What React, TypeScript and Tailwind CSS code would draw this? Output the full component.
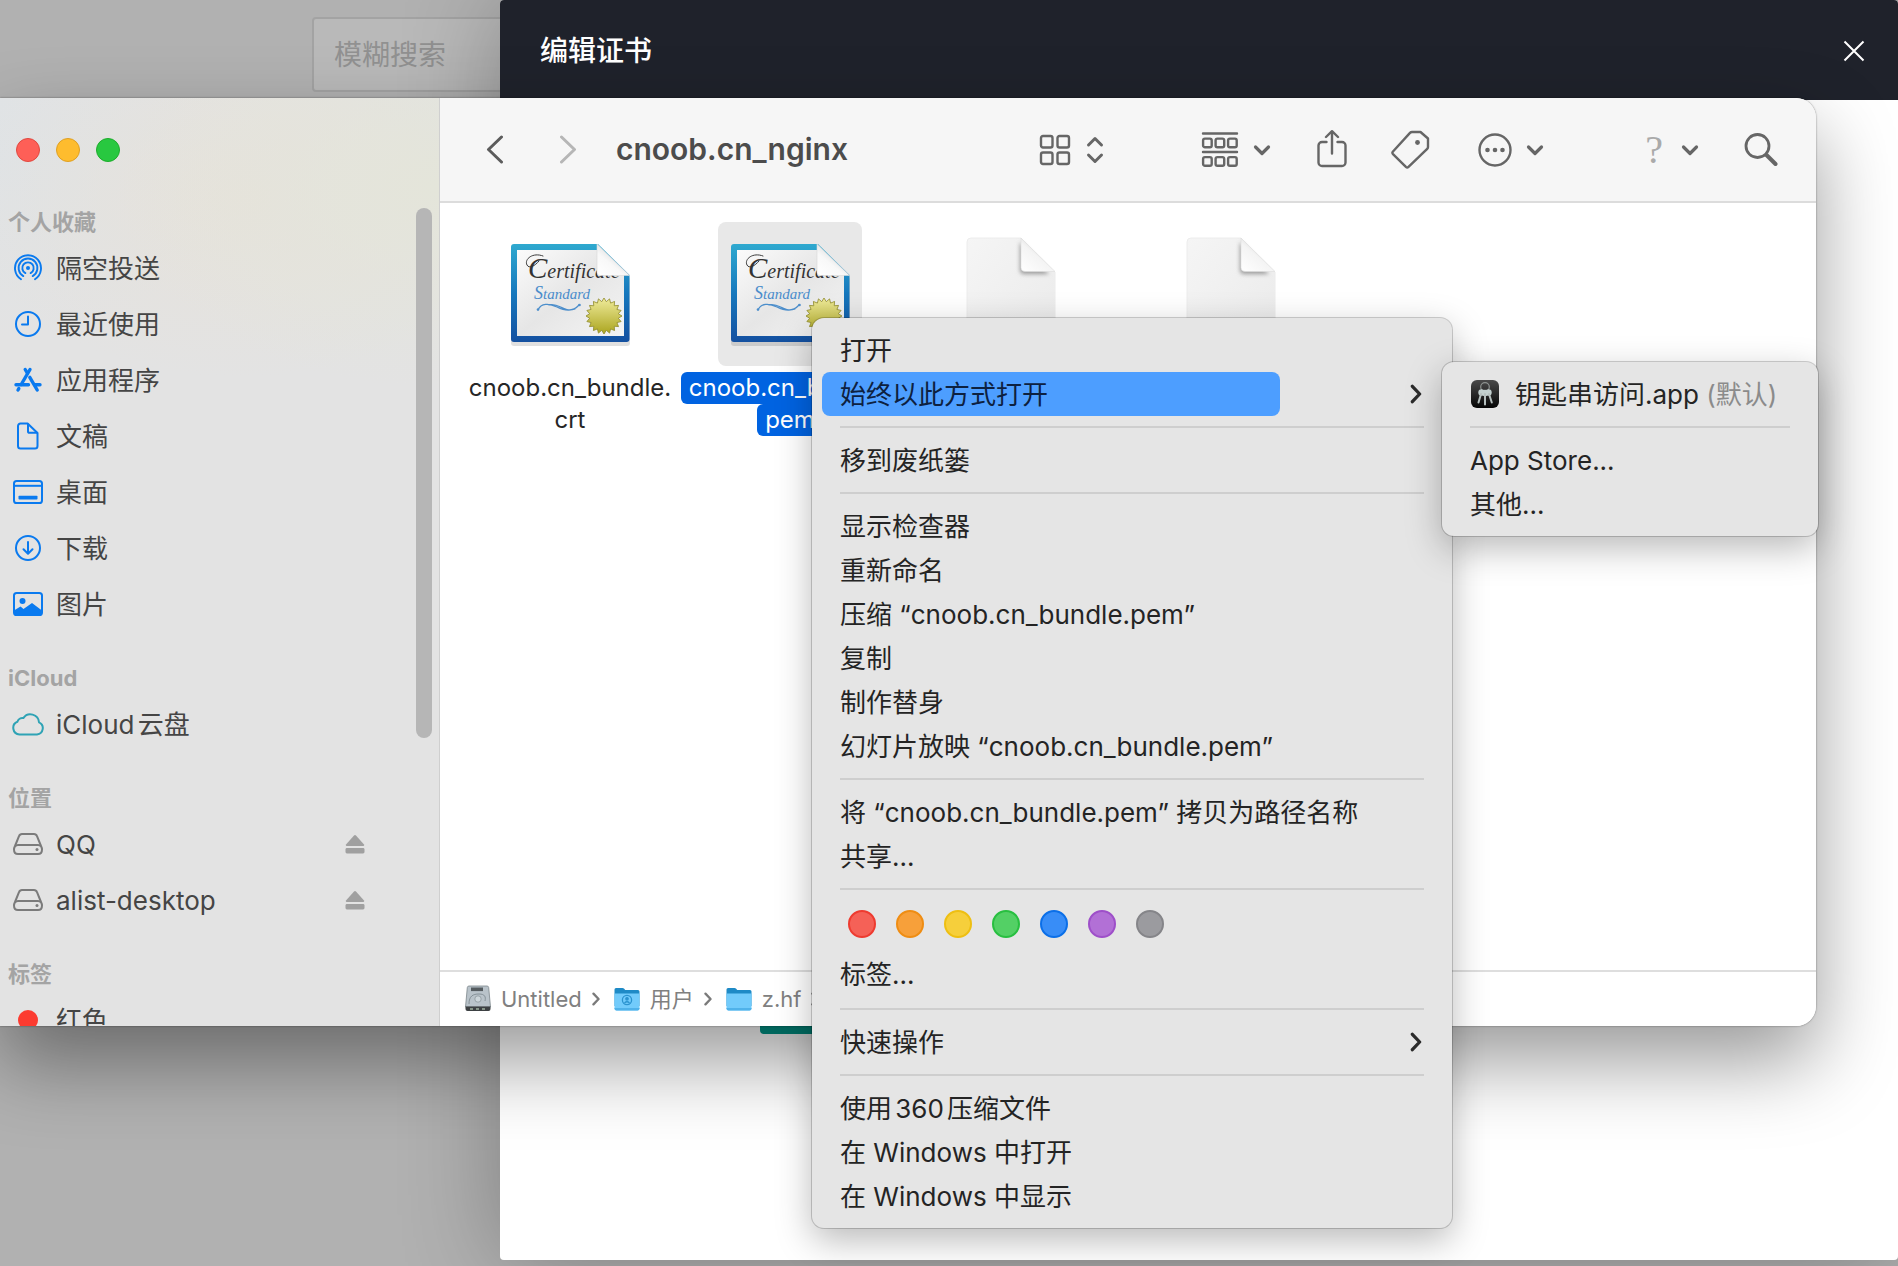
import type { ReactNode } from 'react';

type SidebarItem = { label: string; icon: ReactNode; eject?: boolean };
type SidebarSection = { title: string; items: SidebarItem[] };

const BLUE = '#0a7aef';

function AirDropIcon() {
  return (
    <svg width="28" height="28" viewBox="0 0 28 28" fill="none" stroke={BLUE} strokeWidth="1.9" strokeLinecap="round">
      <path d="M7 25.2A13 13 0 1 1 21 25.2" />
      <path d="M9.3 22.1A9.4 9.4 0 1 1 18.7 22.1" />
      <path d="M11.4 19.1A5.7 5.7 0 1 1 16.6 19.1" />
      <circle cx="14" cy="14" r="2" fill={BLUE} stroke="none" />
    </svg>
  );
}

function ClockIcon() {
  return (
    <svg width="28" height="28" viewBox="0 0 28 28" fill="none" stroke={BLUE} strokeWidth="2" strokeLinecap="round" strokeLinejoin="round">
      <circle cx="14" cy="14" r="12" />
      <path d="M14 6.5V14.5H8" />
    </svg>
  );
}

function AppsIcon() {
  return (
    <svg width="28" height="28" viewBox="0 0 28 28" fill="none" stroke={BLUE} strokeWidth="3.4" strokeLinecap="round">
      <path d="M16 3.5L7.2 18.5M4.8 22.6L4 24" />
      <path d="M11.2 3.5L13.4 7.2M15.8 11.4L23.2 24" />
      <path d="M2 18.8H14.5M21 18.8H26" />
    </svg>
  );
}

function DocIcon() {
  return (
    <svg width="24" height="28" viewBox="0 0 24 28" fill="none" stroke={BLUE} strokeWidth="2" strokeLinejoin="round">
      <path d="M4.5 1.5H11.6L21.5 11V24A2.5 2.5 0 0 1 19 26.5H4.5A2.5 2.5 0 0 1 2 24V4A2.5 2.5 0 0 1 4.5 1.5Z" />
      <path d="M12 1.8V9.2A1.6 1.6 0 0 0 13.6 10.8H21.3" />
    </svg>
  );
}

function DesktopIcon() {
  return (
    <svg width="32" height="24" viewBox="0 0 32 24" fill="none" stroke={BLUE} strokeWidth="2">
      <rect x="2" y="1" width="28" height="22" rx="2.6" />
      <path d="M2 5.8H30" />
      <rect x="6.5" y="15.8" width="19" height="3.8" rx="0.8" fill={BLUE} stroke="none" />
    </svg>
  );
}

function DownloadIcon() {
  return (
    <svg width="28" height="28" viewBox="0 0 28 28" fill="none" stroke={BLUE} strokeWidth="2" strokeLinecap="round" strokeLinejoin="round">
      <circle cx="14" cy="14" r="12" />
      <path d="M14 8V19.5M9.5 15.2L14 19.7L18.5 15.2" />
    </svg>
  );
}

function PictureIcon() {
  return (
    <svg width="32" height="24" viewBox="0 0 32 24" fill="none">
      <rect x="2" y="1" width="28" height="22" rx="2.6" stroke={BLUE} strokeWidth="2" />
      <circle cx="10.5" cy="9" r="3" fill={BLUE} />
      <path d="M2 18.5L8.5 14.5L11.5 17L20 11L30 18.5V21Q30 23 28 23H4Q2 23 2 21Z" fill={BLUE} />
    </svg>
  );
}

function CloudIcon() {
  return (
    <svg width="34" height="24" viewBox="0 0 34 24" fill="none" stroke="#2fa3b5" strokeWidth="2" strokeLinejoin="round">
      <path d="M8.5 22.5A6.6 6.6 0 0 1 6.4 9.8A5.3 5.3 0 0 1 12.3 6.1A8.6 8.6 0 0 1 28 10.3A6.4 6.4 0 0 1 26 22.5Z" />
    </svg>
  );
}

function DriveIcon() {
  return (
    <svg width="30" height="24" viewBox="0 0 30 24" fill="none" stroke="#7b7b7b" strokeWidth="2" strokeLinejoin="round">
      <path d="M9 2H21Q23.2 2 24 4.2L28 14Q29 16 29 17.5Q29 22 25 22H5Q1 22 1 17.5Q1 16 2 14L6 4.2Q6.8 2 9 2Z" />
      <path d="M2 14.5Q3.2 13 5 13H25Q26.8 13 28 14.5" />
      <circle cx="24" cy="17.5" r="1.5" fill="#7b7b7b" stroke="none" />
    </svg>
  );
}

function EjectIcon() {
  return (
    <svg width="20" height="20" viewBox="0 0 20 20" fill="#a0a0a0">
      <path d="M9 1.6Q10 0.6 11 1.6L19 10.4Q19.8 12 18 12H2Q0.2 12 1 10.4Z" />
      <rect x="0.5" y="14" width="19" height="5.5" rx="1.4" />
    </svg>
  );
}

function SmallChevron() {
  return (
    <svg width="18" height="12" viewBox="0 0 18 12" fill="none" stroke="#666" strokeWidth="3.2" strokeLinecap="round" strokeLinejoin="round">
      <path d="M2.5 3L9 9.5L15.5 3" />
    </svg>
  );
}

function RightChevron({ className, color = '#2b2b2b' }: { className?: string; color?: string }) {
  return (
    <svg className={className} viewBox="0 0 12 22" fill="none" stroke={color} strokeWidth="3.6" strokeLinecap="round" strokeLinejoin="round">
      <path d="M2 2.5L10 11L2 19.5" />
    </svg>
  );
}

function GridIcon() {
  return (
    <svg width="32" height="32" viewBox="0 0 32 32" fill="none" stroke="#666" strokeWidth="2.4">
      <rect x="2" y="2" width="11.5" height="11.5" rx="2" />
      <rect x="18.5" y="2" width="11.5" height="11.5" rx="2" />
      <rect x="2" y="18.5" width="11.5" height="11.5" rx="2" />
      <rect x="18.5" y="18.5" width="11.5" height="11.5" rx="2" />
    </svg>
  );
}

function UpDownIcon() {
  return (
    <svg width="18" height="28" viewBox="0 0 18 28" fill="none" stroke="#666" strokeWidth="3" strokeLinecap="round" strokeLinejoin="round">
      <path d="M2.5 9L9 2.5L15.5 9M2.5 19L9 25.5L15.5 19" />
    </svg>
  );
}

function GroupIcon() {
  return (
    <svg width="38" height="38" viewBox="0 0 38 38" fill="none" stroke="#666" strokeWidth="2.4" strokeLinecap="round">
      <path d="M2 2.5H36M2 21H36" />
      {[2.1, 14.6, 27.1].map((x) => (
        <g key={x}>
          <rect x={x} y="7.6" width="8.6" height="8.6" rx="1.8" />
          <rect x={x} y="26.1" width="8.6" height="8.6" rx="1.8" />
        </g>
      ))}
    </svg>
  );
}

function ShareIcon() {
  return (
    <svg width="30" height="40" viewBox="0 0 30 40" fill="none" stroke="#666" strokeWidth="2.4" strokeLinecap="round" strokeLinejoin="round">
      <path d="M9.5 12H5A3.5 3.5 0 0 0 1.5 15.500V32.500A3.5 3.5 0 0 0 5 36H25A3.5 3.5 0 0 0 28.5 32.500V15.500A3.5 3.5 0 0 0 25 12H20.5" />
      <path d="M15 23.500V1.500M9 7L15 1.200L21 7" />
    </svg>
  );
}

function TagIcon() {
  return (
    <svg width="40" height="40" viewBox="0 0 40 40" fill="none" stroke="#666" strokeWidth="2.4" strokeLinejoin="round">
      <path d="M21 2H29.500L37 8.500V17Q37 18.100 36.200 18.900L17.500 36.800Q16.200 38 14.900 36.800L2 24.100Q0.800 22.800 2 21.500L19 2.900Q19.800 2 21 2Z" />
      <circle cx="26.500" cy="12.500" r="2.4" fill="#666" stroke="none" />
    </svg>
  );
}

function MoreIcon() {
  return (
    <svg width="36" height="36" viewBox="0 0 36 36" fill="none" stroke="#666" strokeWidth="2.4">
      <circle cx="18" cy="18" r="15.5" />
      <g fill="#666" stroke="none">
        <circle cx="10.5" cy="18" r="2.3" />
        <circle cx="18" cy="18" r="2.3" />
        <circle cx="25.5" cy="18" r="2.3" />
      </g>
    </svg>
  );
}

function SearchIcon() {
  return (
    <svg width="34" height="34" viewBox="0 0 34 34" fill="none" stroke="#666" strokeLinecap="round">
      <circle cx="13.5" cy="13" r="11.5" strokeWidth="2.8" />
      <path d="M22.5 22L31.5 31" strokeWidth="4" />
    </svg>
  );
}

function starPoints(cx: number, cy: number, outer: number, inner: number, n: number) {
  return Array.from({ length: n * 2 }, (_, i) => {
    const r = i % 2 ? inner : outer;
    const a = (Math.PI * i) / n;
    return `${(cx + r * Math.sin(a)).toFixed(2)},${(cy - r * Math.cos(a)).toFixed(2)}`;
  }).join(' ');
}

function CertificateIcon({ id }: { id: string }) {
  return (
    <svg width="128" height="108" viewBox="-1 -1 128 108">
      <defs>
        <linearGradient id={`${id}-frame`} x1="0" y1="0" x2="0" y2="1">
          <stop offset="0" stopColor="#2fa9cf" />
          <stop offset="0.5" stopColor="#1678bd" />
          <stop offset="1" stopColor="#1450a0" />
        </linearGradient>
        <linearGradient id={`${id}-paper`} x1="0" y1="0" x2="1" y2="1">
          <stop offset="0" stopColor="#fbfbfb" />
          <stop offset="0.5" stopColor="#e6e6e6" />
          <stop offset="1" stopColor="#f4f4f4" />
        </linearGradient>
        <linearGradient id={`${id}-fold`} x1="0" y1="1" x2="0.6" y2="0.3">
          <stop offset="0" stopColor="#ffffff" />
          <stop offset="0.6" stopColor="#f8f8f8" />
          <stop offset="1" stopColor="#dedede" />
        </linearGradient>
        <linearGradient id={`${id}-seal`} x1="0" y1="0" x2="0" y2="1">
          <stop offset="0" stopColor="#efeb9b" />
          <stop offset="1" stopColor="#aba51f" />
        </linearGradient>
      </defs>
      <path d="M7 5H91L123 37V102Q123 105 120 105H7Q4 105 4 102V8Q4 5 7 5Z" fill="#000" opacity="0.12" />
      <path d="M7 3H91L122.5 34V98Q122.5 101 119.5 101H7Q4 101 4 98V6Q4 3 7 3Z" fill={`url(#${id}-frame)`} />
      <path d="M10 9H91V34H117V95H10Z" fill={`url(#${id}-paper)`} />
      <path d="M36 15C26 11 17 18 20 24C22 28 28 25 32 20" fill="none" stroke="#3c3c3c" strokeWidth="1" strokeLinecap="round" />
      <text x="21" y="37" fontStyle="italic" fontFamily="Liberation Serif, serif" fill="#333">
        <tspan fontSize="29">C</tspan>
        <tspan fontSize="20">ertificate</tspan>
      </text>
      <text x="27" y="58" fontStyle="italic" fontFamily="Liberation Serif, serif" fill="#4a8ccb">
        <tspan fontSize="18">S</tspan>
        <tspan fontSize="15">tandard</tspan>
      </text>
      <path d="M31 69C34 62 42 62 50 66S66 71 72 64M42 64C52 61 56 72 68 68" fill="none" stroke="#4c8ecb" strokeWidth="1.2" strokeLinecap="round" />
      <circle cx="31" cy="68.500" r="1.300" fill="#4c8ecb" />
      <circle cx="72.500" cy="64" r="1.300" fill="#4c8ecb" />
      <path d="M90 3L122.5 34.5H93Q90 34.5 90 31.5Z" fill={`url(#${id}-fold)`} stroke="#d6d6d6" strokeWidth="0.6" />
      <polygon points={starPoints(97, 75, 18, 14.5, 20)} fill={`url(#${id}-seal)`} stroke="#8f8a2a" strokeWidth="0.8" />
    </svg>
  );
}

function BlankFileIcon({ id }: { id: string }) {
  return (
    <svg width="96" height="116" viewBox="-1 -1 96 116">
      <defs>
        <linearGradient id={`${id}-body`} x1="0" y1="0" x2="1" y2="1">
          <stop offset="0" stopColor="#f5f5f5" />
          <stop offset="1" stopColor="#eaeaea" />
        </linearGradient>
        <linearGradient id={`${id}-corner`} x1="0" y1="1" x2="0.6" y2="0.3">
          <stop offset="0" stopColor="#ffffff" />
          <stop offset="0.7" stopColor="#f4f4f4" />
          <stop offset="1" stopColor="#dcdcdc" />
        </linearGradient>
        <filter id={`${id}-soft`} x="-30%" y="-30%" width="160%" height="160%">
          <feGaussianBlur stdDeviation="2" />
        </filter>
      </defs>
      <path d="M8 1H58L92 35V110Q92 114 88 114H8Q4 114 4 110V5Q4 1 8 1Z" fill={`url(#${id}-body)`} stroke="#ececec" />
      <path d="M57 5V33Q57 37 61 37H86Z" fill="#9a9a9a" filter={`url(#${id}-soft)`} />
      <path d="M58 1L92 34.5H62Q58 34.5 58 30.5Z" fill={`url(#${id}-corner)`} stroke="#dedede" strokeWidth="0.6" />
    </svg>
  );
}

function HardDiskIcon() {
  return (
    <svg width="26" height="28" viewBox="0 0 26 28">
      <path d="M4 1H22Q23.500 1 23.700 2.500L25.500 22H0.500L2.300 2.500Q2.500 1 4 1Z" fill="#b9c3ca" stroke="#7c868c" strokeWidth="0.8" />
      <path d="M0.500 21.500H25.500V24Q25.500 26 23.500 26H2.500Q0.500 26 0.500 24Z" fill="#3d4143" />
      <rect x="6" y="2.500" width="12" height="3.600" fill="#555c60" />
      <circle cx="13" cy="14" r="3.200" fill="#cdd6db" stroke="#8a959b" strokeWidth="0.8" />
      <path d="M4 19C4 11 8 9 14 9S21 12 20 16" fill="none" stroke="#7f8b92" strokeWidth="0.9" />
      <path d="M5 24H8M11 24H14M17 24H20" stroke="#9fb0a0" strokeWidth="1.4" />
    </svg>
  );
}

function FolderIcon({ person = false }: { person?: boolean }) {
  return (
    <svg width="26" height="26" viewBox="0 0 26 26">
      <path d="M0.5 3.5Q0.5 2 2 2H8.5Q9.5 2 10.2 2.8L11.2 4H24Q25.5 4 25.5 5.5V20H0.5Z" fill="#1e8ac6" />
      <path d="M0.5 7.5H25.5V22.5Q25.5 24.5 23.5 24.5H2.5Q0.5 24.5 0.5 22.5Z" fill="#72cbfb" />
      <path d="M0.5 22H25.5V22.5Q25.5 24.5 23.5 24.5H2.5Q0.5 24.5 0.5 22.5Z" fill="#4fb2ea" />
      {person && (
        <g fill="none" stroke="#2b93cf" strokeWidth="1.3">
          <circle cx="13" cy="14" r="4.6" />
          <circle cx="13" cy="12.8" r="1.2" fill="#2b93cf" />
          <path d="M10.500 17Q13 14.500 15.500 17" />
        </g>
      )}
    </svg>
  );
}

function KeychainIcon() {
  return (
    <svg width="28" height="28" viewBox="0 0 28 28">
      <defs>
        <linearGradient id="keychain" x1="0" y1="0" x2="0" y2="1">
          <stop offset="0" stopColor="#4a4a4a" />
          <stop offset="1" stopColor="#050505" />
        </linearGradient>
      </defs>
      <rect width="28" height="28" rx="6" fill="url(#keychain)" />
      <circle cx="14" cy="7" r="4.3" fill="none" stroke="#8d9290" strokeWidth="1.2" />
      <g fill="#c3d0cf">
        <circle cx="10.5" cy="12.5" r="3.2" />
        <circle cx="17.5" cy="12.5" r="3.2" />
        <circle cx="14" cy="13" r="3.2" />
      </g>
      <g stroke="#b5bfbe" strokeWidth="2" strokeLinecap="round">
        <path d="M10 14L7.5 22.5M14 14V24.5M18 14L20.8 22.5" />
      </g>
    </svg>
  );
}

const sections: SidebarSection[] = [
  {
    title: '个人收藏',
    items: [
      { label: '隔空投送', icon: <AirDropIcon /> },
      { label: '最近使用', icon: <ClockIcon /> },
      { label: '应用程序', icon: <AppsIcon /> },
      { label: '文稿', icon: <DocIcon /> },
      { label: '桌面', icon: <DesktopIcon /> },
      { label: '下载', icon: <DownloadIcon /> },
      { label: '图片', icon: <PictureIcon /> },
    ],
  },
  { title: 'iCloud', items: [{ label: 'iCloud云盘', icon: <CloudIcon /> }] },
  {
    title: '位置',
    items: [
      { label: 'QQ', icon: <DriveIcon />, eject: true },
      { label: 'alist-desktop', icon: <DriveIcon />, eject: true },
    ],
  },
  { title: '标签', items: [{ label: '红色', icon: <span className="size-5 rounded-full bg-[#fc3b30]" /> }] },
];

const tagColors = [
  { name: '红色', style: 'bg-[#f56157] border-[#ee3b30]' },
  { name: '橙色', style: 'bg-[#f7a03a] border-[#ef8d13]' },
  { name: '黄色', style: 'bg-[#f6cf3b] border-[#eebf12]' },
  { name: '绿色', style: 'bg-[#53d065] border-[#28bf40]' },
  { name: '蓝色', style: 'bg-[#388df7] border-[#0b6fe8]' },
  { name: '紫色', style: 'bg-[#b270d6] border-[#9e4fc9]' },
  { name: '灰色', style: 'bg-[#9b9b9f] border-[#858589]' },
];

function Sidebar() {
  return (
    <aside className="flex w-[440px] shrink-0 border-r border-[#cfcfcf] bg-[#e3e3e3] bg-[radial-gradient(ellipse_320px_200px_at_100%_90px,#e4e5da,transparent),radial-gradient(ellipse_280px_180px_at_240px_100px,#e6e2db,transparent),radial-gradient(ellipse_240px_180px_at_0_60px,#dfe3e6,transparent)]">
      <div className="min-w-0 flex-1">
        <div className="flex gap-4 px-4 pt-10">
          <button aria-label="关闭" className="size-6 rounded-full border border-[#e0483f] bg-[#fe5f57]" />
          <button aria-label="最小化" className="size-6 rounded-full border border-[#dfa023] bg-[#febc2e]" />
          <button aria-label="缩放" className="size-6 rounded-full border border-[#1dad2b] bg-[#28c840]" />
        </div>
        <nav className="mt-10 flex flex-col gap-[26px]">
          {sections.map((section) => (
            <section key={section.title}>
              <h2 className="h-[38px] pl-2 text-[22px] leading-10 font-bold text-[#a4a4a4]">{section.title}</h2>
              {section.items.map((item) => (
                <a key={item.label} href="#" className="flex h-14 items-center text-[26px] text-[#454545] [text-autospace:normal]">
                  <span className="flex w-14 shrink-0 justify-center">{item.icon}</span>
                  {item.label}
                  {item.eject && (
                    <span className="mr-[51px] ml-auto">
                      <EjectIcon />
                    </span>
                  )}
                </a>
              ))}
            </section>
          ))}
        </nav>
      </div>
      <div className="mt-[110px] mr-[7px] h-[530px] w-4 rounded-full bg-[#b6b6b6]" />
    </aside>
  );
}

function Toolbar() {
  return (
    <header className="flex h-[105px] shrink-0 items-center justify-between border-b-2 border-[#dcdcdc] bg-[#f6f6f6] pr-[38px] pl-[46px]">
      <div className="flex items-center">
        <button aria-label="后退" className="mr-[55px]">
          <svg width="18" height="30" viewBox="0 0 18 30" fill="none" stroke="#5c5c5c" strokeWidth="3" strokeLinecap="round" strokeLinejoin="round">
            <path d="M15.5 2L2.5 14.500L15.5 27" />
          </svg>
        </button>
        <button aria-label="前进" className="mr-[39px]">
          <svg width="18" height="30" viewBox="0 0 18 30" fill="none" stroke="#b6b6b6" strokeWidth="3" strokeLinecap="round" strokeLinejoin="round">
            <path d="M2.5 2L15.5 14.500L2.5 27" />
          </svg>
        </button>
        <h1 className="text-[30px] font-semibold text-[#4c4c4c]">cnoob.cn_nginx</h1>
      </div>
      <div className="flex items-center">
        <button aria-label="显示方式" className="mr-[97px] flex items-center gap-[15px]">
          <GridIcon />
          <UpDownIcon />
        </button>
        <button aria-label="分组" className="mr-[46px] flex items-center gap-3.5">
          <GroupIcon />
          <SmallChevron />
        </button>
        <button aria-label="共享" className="mr-11">
          <ShareIcon />
        </button>
        <button aria-label="编辑标签" className="mr-[46px]">
          <TagIcon />
        </button>
        <button aria-label="更多" className="mr-[101px] flex items-center gap-[13px]">
          <MoreIcon />
          <SmallChevron />
        </button>
        <button aria-label="帮助" className="mr-[45px] flex items-center gap-[18px] text-[#aaa]">
          <span className="font-['Liberation_Serif',serif] text-[40px] leading-10">?</span>
          <SmallChevron />
        </button>
        <button aria-label="搜索">
          <SearchIcon />
        </button>
      </div>
    </header>
  );
}

function FileItem({ icon, lines = [], selected = false }: { icon: ReactNode; lines?: string[]; selected?: boolean }) {
  return (
    <div className="flex w-[220px] flex-col items-center">
      <div className={`flex size-36 items-center justify-center rounded-lg ${selected ? 'bg-[#e8e8e8]' : ''}`}>{icon}</div>
      <p className="mt-1.5 flex flex-col items-center text-2xl leading-8 text-[#262626]">
        {lines.map((line) => (
          <span key={line} className={selected ? 'rounded-md bg-[#0063e1] px-2 text-white' : ''}>
            {line}
          </span>
        ))}
      </p>
    </div>
  );
}

function PathBar() {
  const parts = [
    { name: 'Untitled', icon: <HardDiskIcon /> },
    { name: '用户', icon: <FolderIcon person /> },
    { name: 'z.hf', icon: <FolderIcon /> },
  ];
  return (
    <footer className="flex h-14 shrink-0 items-center border-t-2 border-[#dedede] bg-white pl-[25px] text-[22px] text-[#808080]">
      {parts.map((part) => (
        <div key={part.name} className="flex items-center gap-2.5">
          {part.icon}
          <span>{part.name}</span>
          <RightChevron className="mr-3.5 h-3.5 w-2" color="#7a7a7a" />
        </div>
      ))}
    </footer>
  );
}

function FinderWindow() {
  return (
    <div className="absolute top-[98px] right-[82px] bottom-[240px] left-0 flex overflow-hidden rounded-r-[20px] bg-white shadow-[0_36px_80px_rgba(0,0,0,0.4),0_0_2px_rgba(0,0,0,0.5)]">
      <Sidebar />
      <main className="flex min-w-0 flex-1 flex-col">
        <Toolbar />
        <div className="flex flex-1 items-start pt-[19px] pl-5">
          <FileItem icon={<CertificateIcon id="crt" />} lines={['cnoob.cn_bundle.', 'crt']} />
          <FileItem icon={<CertificateIcon id="pem" />} lines={['cnoob.cn_bundle.', 'pem']} selected />
          <FileItem icon={<BlankFileIcon id="csr" />} />
          <FileItem icon={<BlankFileIcon id="key" />} />
        </div>
        <PathBar />
      </main>
    </div>
  );
}

function MenuItem({ children, active = false, submenu = false }: { children: ReactNode; active?: boolean; submenu?: boolean }) {
  return (
    <button role="menuitem" className="flex h-11 w-full items-center justify-between pr-[30px] pl-2.5 text-left">
      <span className={`flex h-11 items-center rounded-lg pl-[18px] whitespace-pre ${active ? 'w-[458px] bg-[#4d9eff] text-[#0d2140]' : ''}`}>
        {children}
      </span>
      {submenu && <RightChevron className="h-5 w-3" />}
    </button>
  );
}

function Separator() {
  return <div role="separator" className="mx-7 my-2.5 h-0.5 bg-[#cecece]" />;
}

const menuStyle =
  'absolute rounded-xl bg-[#e5e5e5] text-[26px] text-[#242424] shadow-[0_12px_36px_rgba(0,0,0,0.28),0_0_0_1px_rgba(0,0,0,0.18)] [text-autospace:normal]';

function ContextMenu() {
  return (
    <div role="menu" className={`${menuStyle} top-[318px] left-[812px] w-[640px] py-2.5`}>
      <MenuItem>打开</MenuItem>
      <MenuItem active submenu>始终以此方式打开</MenuItem>
      <Separator />
      <MenuItem>移到废纸篓</MenuItem>
      <Separator />
      <MenuItem>显示检查器</MenuItem>
      <MenuItem>重新命名</MenuItem>
      <MenuItem>压缩 “cnoob.cn_bundle.pem”</MenuItem>
      <MenuItem>复制</MenuItem>
      <MenuItem>制作替身</MenuItem>
      <MenuItem>幻灯片放映 “cnoob.cn_bundle.pem”</MenuItem>
      <Separator />
      <MenuItem>将 “cnoob.cn_bundle.pem” 拷贝为路径名称</MenuItem>
      <MenuItem>共享...</MenuItem>
      <Separator />
      <div className="flex h-[52px] gap-5 pt-2.5 pl-9">
        {tagColors.map((tag) => (
          <button key={tag.name} aria-label={tag.name} className={`size-7 rounded-full border-2 ${tag.style}`} />
        ))}
      </div>
      <div className="pb-0.5">
        <MenuItem>标签...</MenuItem>
      </div>
      <Separator />
      <MenuItem submenu>快速操作</MenuItem>
      <Separator />
      <MenuItem>使用360压缩文件</MenuItem>
      <MenuItem>在 Windows 中打开</MenuItem>
      <MenuItem>在 Windows 中显示</MenuItem>
    </div>
  );
}

function OpenWithMenu() {
  return (
    <div role="menu" className={`${menuStyle} top-[362px] left-[1442px] w-[376px] py-2.5`}>
      <MenuItem>
        <span className="mr-4 ml-px">
          <KeychainIcon />
        </span>
        钥匙串访问.app<span className="text-[#8b8b8b]"> (默认)</span>
      </MenuItem>
      <Separator />
      <MenuItem>App Store...</MenuItem>
      <MenuItem>其他...</MenuItem>
    </div>
  );
}

function EditDialog() {
  return (
    <div className="absolute top-0 right-0 bottom-1.5 left-[500px] overflow-hidden rounded bg-white">
      <div className="flex h-[100px] items-center justify-between bg-[#1f222b] pt-0.5 pr-[33px] pl-10 text-white">
        <h2 className="text-[28px] font-medium">编辑证书</h2>
        <button aria-label="关闭">
          <svg width="22" height="22" viewBox="0 0 22 22" fill="none" stroke="#fff" strokeWidth="2">
            <path d="M1.5 1.5L20.5 20.5M20.5 1.5L1.5 20.5" />
          </svg>
        </button>
      </div>
      <div className="mt-[858px] ml-[260px] h-[76px] w-32 rounded bg-[#009688]" />
    </div>
  );
}

export default function App() {
  return (
    <div className="relative h-screen overflow-hidden bg-[#b1b1b1] font-['Inter','Noto_Sans_CJK_SC',sans-serif]">
      <div className="pt-[17px] pl-[312px]">
        <input
          aria-label="模糊搜索"
          placeholder="模糊搜索"
          className="h-[75px] w-80 rounded-sm border-2 border-[#a3a3a3] bg-[#b9b9b9] px-5 text-[28px] placeholder:text-[#919191]"
        />
      </div>
      <div className="absolute top-0 right-0 bottom-1.5 left-[500px] rounded shadow-[2px_2px_100px_rgba(0,0,0,0.3)]" />
      <EditDialog />
      <FinderWindow />
      <ContextMenu />
      <OpenWithMenu />
    </div>
  );
}
